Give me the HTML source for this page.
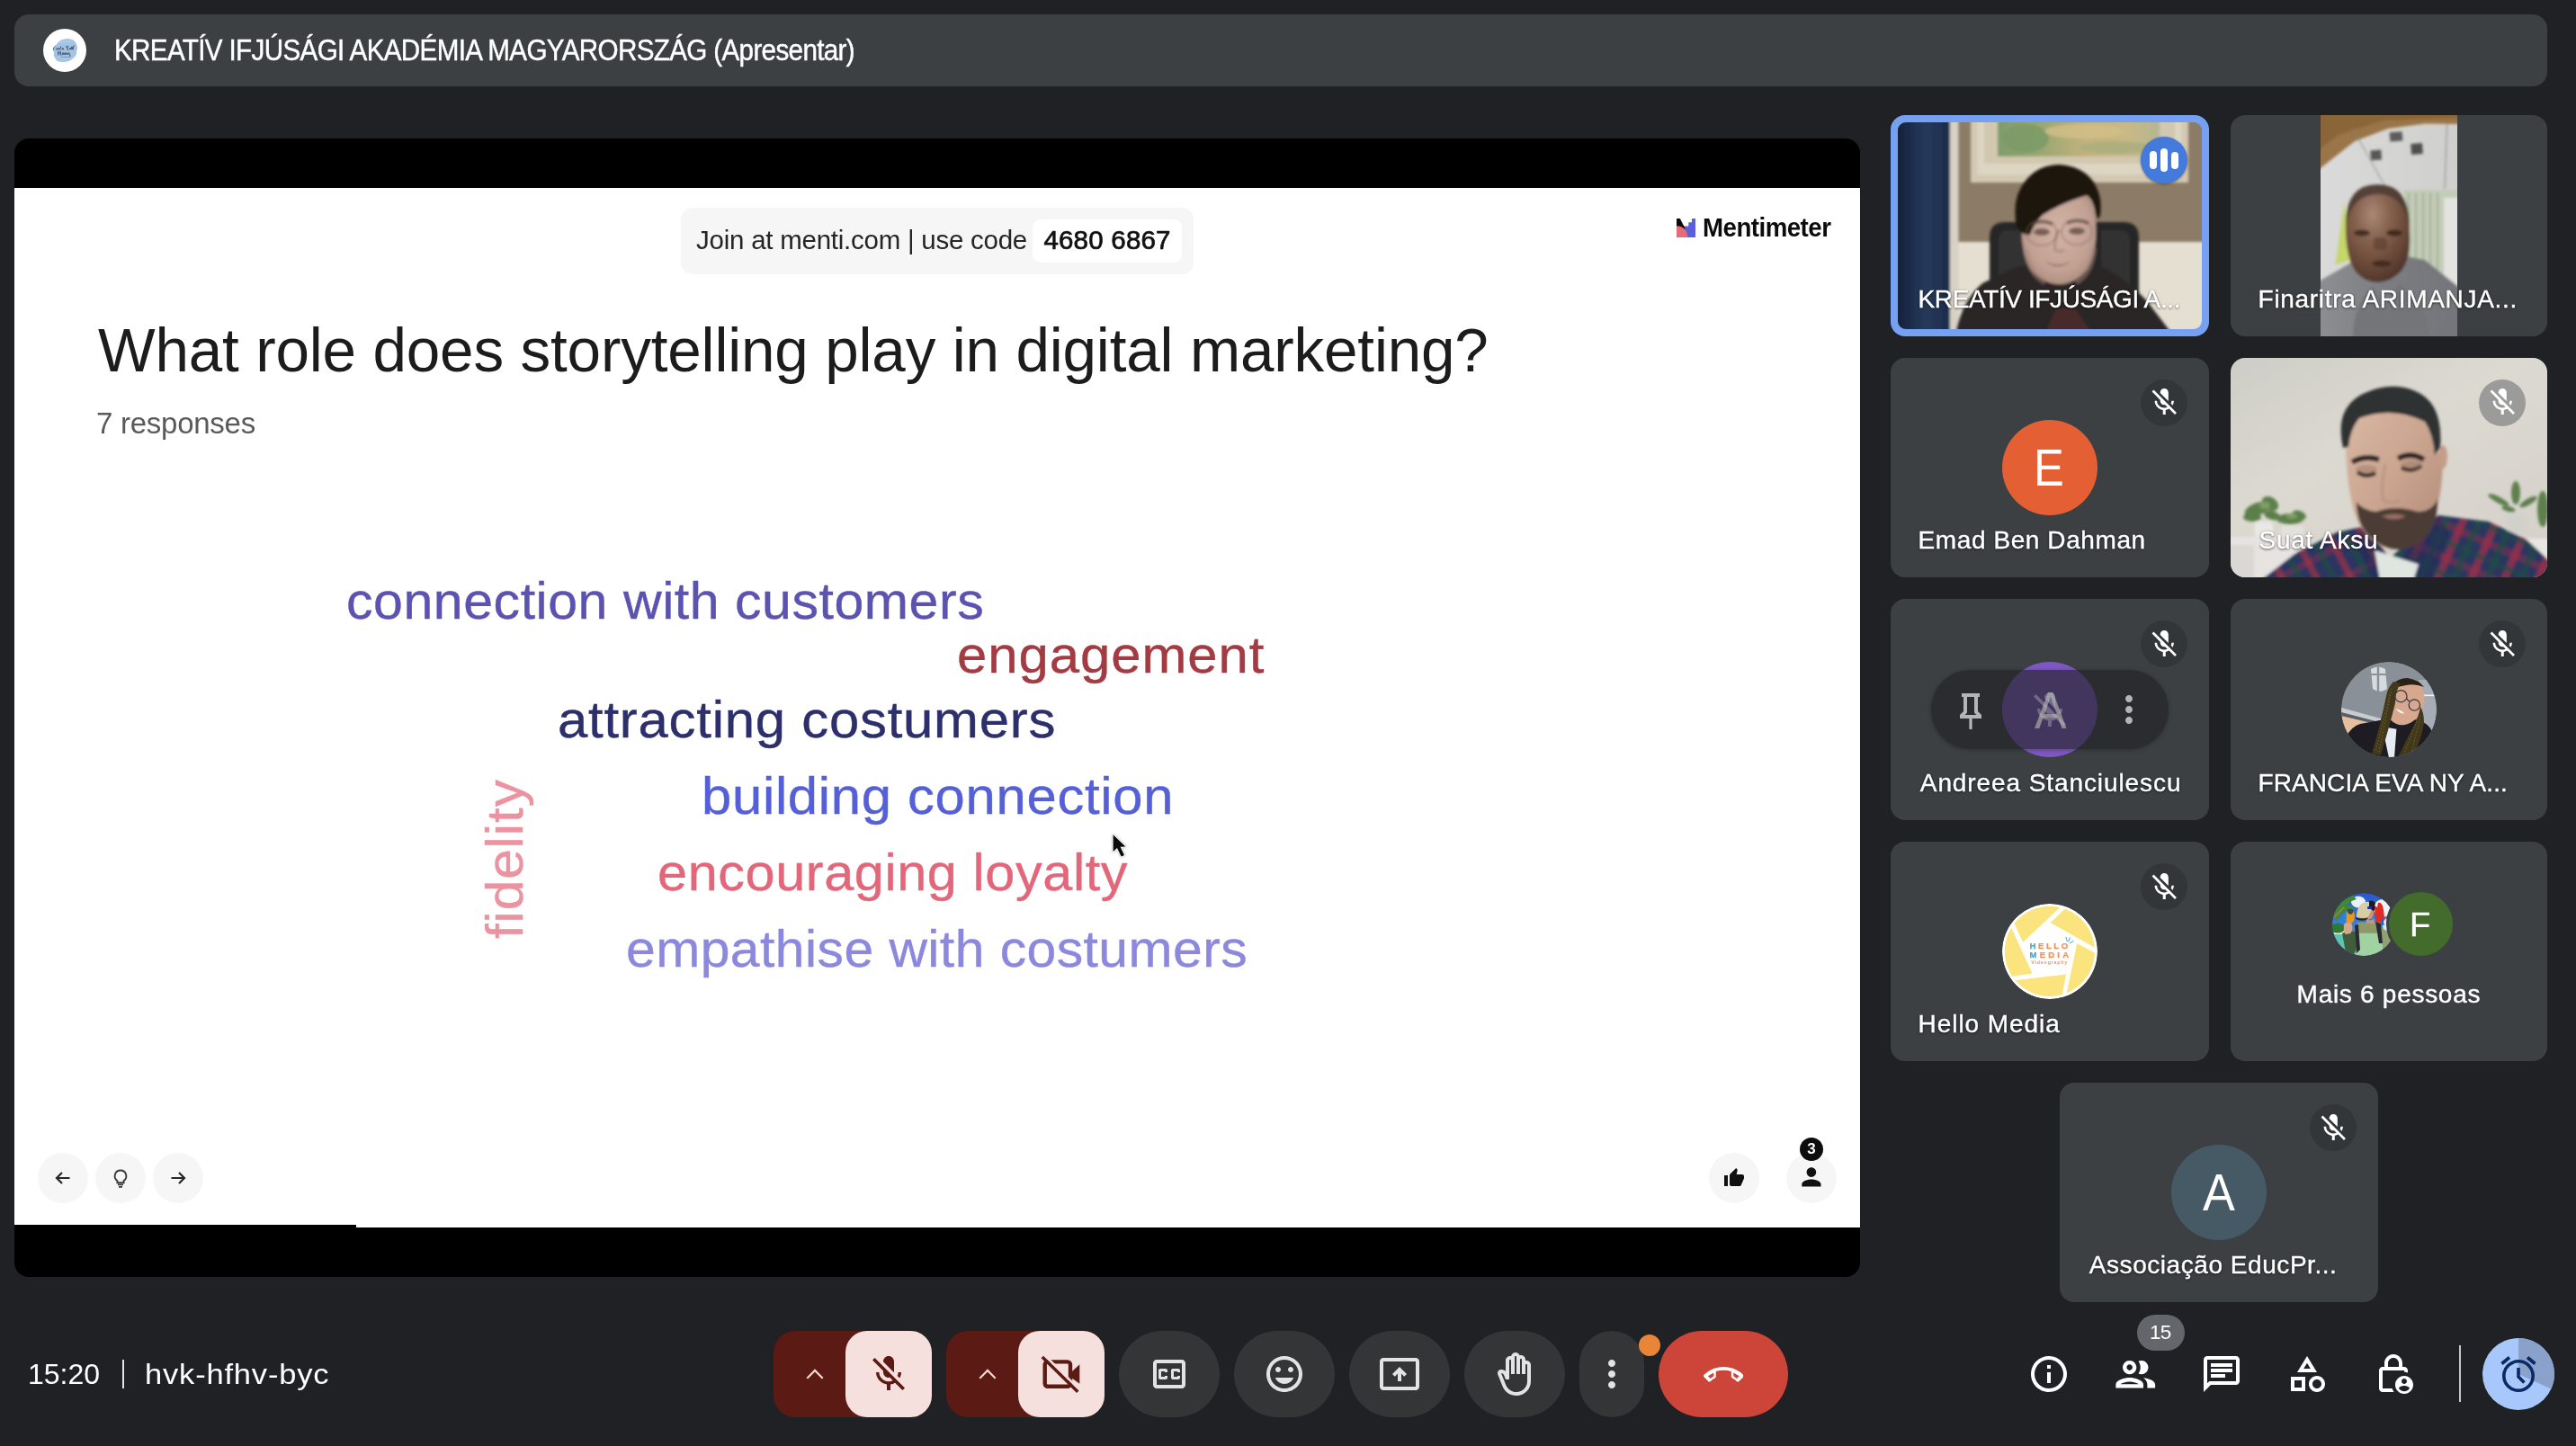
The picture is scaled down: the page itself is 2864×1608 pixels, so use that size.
<!DOCTYPE html>
<html lang="pt"><head><meta charset="utf-8"><title>Meet</title>
<style>
html,body{margin:0;padding:0}
body{width:2864px;height:1608px;background:#202124;position:relative;overflow:hidden;font-family:"Liberation Sans",sans-serif}
.abs{position:absolute}
.t{position:absolute;white-space:pre;line-height:1;transform-origin:0 0}
.tile{position:absolute;background:#3c4043;border-radius:16px;overflow:hidden}
.nm{text-shadow:0 1px 3px rgba(0,0,0,.65),0 0 2px rgba(0,0,0,.4)}
.mute{position:absolute;width:52px;height:52px;border-radius:50%;background:rgba(32,33,36,.32)}
.av{position:absolute;width:106px;height:106px;border-radius:50%;overflow:hidden}
.cb{position:absolute;top:1480px;height:96px;border-radius:48px;background:#333537}
.nav{position:absolute;width:56px;height:56px;border-radius:50%;background:#f6f6f6}
</style></head><body><div class="abs" style="left:0;top:0;width:2864px;height:1608px;will-change:transform">

<div class="abs" style="left:16px;top:16px;width:2816px;height:80px;border-radius:16px;background:#3c4043"></div>
<div class="abs" style="left:48px;top:32px;width:48px;height:48px"><svg class="abs" style="left:0;top:0" width="48" height="48" viewBox="0 0 48 48">
<defs><filter id="bt"><feGaussianBlur stdDeviation=".5"/></filter></defs>
<circle cx="24" cy="24" r="24" fill="#fff"/>
<g filter="url(#bt)"><path d="M12 27q-2-6 3-10q4-6 12-6q8 0 10 6q2 4 0 8q1 4-3 7q-4 5-12 5q-8 0-9-5q-2-2-1-5z" fill="#a3c4e6"/>
<path d="M16 16q8-5 18-1q-8-1-18 1zM14 30q8 6 20 2q-10 2-20-2z" fill="#b9d3ee" opacity=".8"/></g>
<g stroke="#2b2f3a" stroke-width=".8" fill="none" opacity=".9" stroke-linecap="round"><path d="M13 19.500q-2 1-1.500 4M14.500 23.300l1-2 1 2 1.200-2 .8 2 1.200-3.500M21 23.200l.8-2.200.8 2.200"/><path d="M25.500 19l1 2.500 1.500-2.500M27 21.500v2.200M29 23.200l1-2 1 2 1-3.500 1 3.500 1.200-4.500"/><path d="M16.800 25v4.200M16.800 27h2.500M19.300 25v4.200M21 29l1-2.500 1 2.500 1.200-2.500 1 2.500 1.200-2.500 1 2.500 1.200-2.500 1.200 2.500v2"/><path d="M19.500 31.500h9" stroke-width=".5" opacity=".7"/></g>
</svg></div>
<div class="t" style="left:126.6px;top:39.0px;font-size:33px;color:#fff;letter-spacing:-0.724px;transform:scaleX(0.8973);-webkit-text-stroke:.45px #fff;">KREATÍV IFJÚSÁGI AKADÉMIA MAGYARORSZÁG (Apresentar)</div>
<div class="abs" style="left:16px;top:154px;width:2052px;height:1266px;border-radius:16px;background:#000;overflow:hidden">
<div class="abs" style="left:0;top:54.500px;width:2052px;height:1156.700px;background:#fff"></div>
<div class="abs" style="left:0;top:1208px;width:380px;height:4px;background:#000"></div>
</div>
<div class="abs" style="left:757px;top:231px;width:570px;height:74px;border-radius:13px;background:#f6f6f6"></div>
<div class="abs" style="left:1148px;top:244px;width:166px;height:47.500px;border-radius:9px;background:#fff"></div>
<div class="t" style="left:774.1px;top:252.2px;font-size:29.5px;color:#252525;letter-spacing:-0.253px;">Join at menti.com | use code</div>
<div class="t" style="left:1160.4px;top:252.2px;font-size:29.5px;color:#111;letter-spacing:0.210px;-webkit-text-stroke:.7px #111;">4680 6867</div>
<svg class="abs" style="left:1864px;top:242.500px" width="21" height="21" viewBox="0 0 21 21"><rect x="0" y="0" width="21" height="21" fill="#fff"/>
<path d="M17 0H21V21H7V8.400H13.300V4.200H17z" fill="#5b5fd9"/><path d="M0 0H3.900L9.300 10.800V14L0 9z" fill="#0a0a0a"/><path d="M0 8.300Q11.500 8.600 12.400 21H0z" fill="#e86c78"/></svg>
<div class="t" style="left:1892.7px;top:239.3px;font-size:29px;color:#0c0c0c;font-weight:bold;letter-spacing:-0.545px;transform:scaleX(0.9540);">Mentimeter</div>
<div class="t" style="left:109.0px;top:355.2px;font-size:68px;color:#1c1c1c;letter-spacing:-0.173px;transform:scaleX(0.9913);">What role does storytelling play in digital marketing?</div>
<div class="t" style="left:106.9px;top:453.6px;font-size:33.5px;color:#5a5a5a;letter-spacing:-0.270px;transform:scaleX(0.9852);">7 responses</div>
<div class="t" style="left:384.8px;top:640.3px;font-size:57.5px;color:#5c53b0;letter-spacing:0.504px;transform:scaleX(1.0277);-webkit-text-stroke:.4px #5c53b0;">connection with customers</div>
<div class="t" style="left:1064.1px;top:700.0px;font-size:57.5px;color:#a33b42;letter-spacing:0.925px;transform:scaleX(1.0410);-webkit-text-stroke:.4px #a33b42;">engagement</div>
<div class="t" style="left:619.6px;top:772.3px;font-size:57.5px;color:#2c2f6b;letter-spacing:0.718px;transform:scaleX(1.0415);-webkit-text-stroke:.4px #2c2f6b;">attracting costumers</div>
<div class="t" style="left:779.5px;top:857.3px;font-size:57.5px;color:#5560d6;letter-spacing:0.681px;transform:scaleX(1.0395);-webkit-text-stroke:.4px #5560d6;">building connection</div>
<div class="t" style="left:730.6px;top:942.3px;font-size:57.5px;color:#e2677a;letter-spacing:0.580px;transform:scaleX(1.0328);-webkit-text-stroke:.4px #e2677a;">encouraging loyalty</div>
<div class="t" style="left:696.3px;top:1027.0px;font-size:57.5px;color:#8b88de;letter-spacing:0.440px;transform:scaleX(1.0235);-webkit-text-stroke:.4px #8b88de;">empathise with costumers</div>
<div class="t" style="left:582px;top:1043.9px;font-size:57.5px;color:#eb93a0;-webkit-text-stroke:.4px #eb93a0;letter-spacing:0.753px;transform-origin:0 0;transform:rotate(-90deg) scaleX(1.0512) translateY(-48.7px)">fidelity</div>
<svg class="abs" style="left:1230px;top:922px" width="30" height="38" viewBox="0 0 30 38"><path d="M7.600 6.300V25l4.400-4 4.600 9.400 3.400-1.400-4.400-9.200 5.900-.3z" fill="#0a0a0a" stroke="#fff" stroke-width="1.800" stroke-linejoin="round" paint-order="stroke" style="filter:drop-shadow(0 .5px 1px rgba(0,0,0,.35))"/></svg>
<div class="nav" style="left:41.7px;top:1281.500px"></div>
<div class="nav" style="left:105.7px;top:1281.500px"></div>
<div class="nav" style="left:170.2px;top:1281.500px"></div>
<svg class="abs" style="left:57.700px;top:1297.500px" width="24" height="24" viewBox="0 0 24 24"><path d="M19.500 12H5.500M11 6l-6 6 6 6" fill="none" stroke="#262626" stroke-width="2.200"/></svg>
<svg class="abs" style="left:186.200px;top:1297.500px" width="24" height="24" viewBox="0 0 24 24"><path d="M4.500 12h14M13 6l6 6-6 6" fill="none" stroke="#262626" stroke-width="2.200"/></svg>
<svg class="abs" style="left:121.700px;top:1297.500px" width="24" height="24" viewBox="0 0 24 24"><path d="M12 3.500a6.300 6.300 0 0 0-3.600 11.500v2.200h7.200V15A6.300 6.300 0 0 0 12 3.500z" fill="none" stroke="#3a3a3a" stroke-width="1.900"/><path d="M9 19.400h6M10 21.800h4" stroke="#3a3a3a" stroke-width="1.700"/></svg>
<div class="nav" style="left:1900.400px;top:1281.500px"></div>
<div class="nav" style="left:1985.800px;top:1281.500px"></div>
<svg class="abs" style="left:1916.3px;top:1297.9px" width="24" height="24" viewBox="0 0 24 24"><path fill="#111" d="M1 21h4V9H1v12zm22-11c0-1.100-.9-2-2-2h-6.310l.95-4.570.03-.32c0-.41-.17-.79-.44-1.060L14.170 1 7.590 7.590C7.220 7.950 7 8.450 7 9v10c0 1.100.9 2 2 2h9c.83 0 1.540-.5 1.840-1.220l3.020-7.050c.09-.23.140-.47.140-.730v-2z"/></svg>
<svg class="abs" style="left:1998.0px;top:1293.4px" width="31.8" height="31.8" viewBox="0 0 24 24"><path fill="#111" d="M12 12c2.210 0 4-1.790 4-4s-1.790-4-4-4-4 1.790-4 4 1.790 4 4 4zm0 2c-2.670 0-8 1.340-8 4v2h16v-2c0-2.660-5.330-4-8-4z"/></svg>
<div class="abs" style="left:2001px;top:1264.500px;width:26px;height:26px;border-radius:50%;background:#0d0d0d"></div>
<div class="t" style="left:2009.2px;top:1268.8px;font-size:17px;color:#fff;font-weight:bold;">3</div>
<div class="tile" style="left:2102px;top:128px;width:354px;height:246px;background:#76a1f2">
<div class="abs" style="left:8px;top:8px;width:338px;height:230px;border-radius:9px;overflow:hidden"><div class="abs" style="left:-8px;top:-8px;width:354px;height:246px"><svg class="abs" style="left:0;top:0" width="354" height="246" viewBox="0 0 354 246">
<defs><filter id="b1" x="-10%" y="-10%" width="120%" height="120%"><feGaussianBlur stdDeviation="1.5"/></filter>
<filter id="b1b" x="-20%" y="-20%" width="140%" height="140%"><feGaussianBlur stdDeviation="4"/></filter>
<linearGradient id="pg1" x1="0" y1="0" x2="1" y2="0"><stop offset="0" stop-color="#7f9c6c"/><stop offset=".3" stop-color="#9fa873"/><stop offset=".55" stop-color="#c4b27c"/><stop offset=".8" stop-color="#c9b986"/><stop offset="1" stop-color="#b4b592"/></linearGradient>
<linearGradient id="cur1" x1="0" y1="0" x2="1" y2="0"><stop offset="0" stop-color="#0e172c"/><stop offset=".25" stop-color="#1a2947"/><stop offset=".6" stop-color="#27395b"/><stop offset="1" stop-color="#1b2a4a"/></linearGradient>
<radialGradient id="sk1" cx=".5" cy=".45" r=".6"><stop offset="0" stop-color="#d2b3a5"/><stop offset=".7" stop-color="#c2a193"/><stop offset="1" stop-color="#a98a7e"/></radialGradient>
</defs>
<rect width="354" height="246" fill="#8c7b66"/>
<g filter="url(#b1)">
<rect x="70" y="141" width="290" height="110" fill="#e5dfd1"/>
<rect x="0" y="0" width="67" height="246" fill="url(#cur1)"/>
<rect x="66" y="0" width="9.500" height="246" fill="#d8d1c5"/>
<rect x="89" y="-4" width="242" height="79" fill="#d3c9b3"/>
<rect x="97" y="-4" width="226" height="70" fill="#ded6c4"/>
<rect x="104" y="-4" width="212" height="58" fill="#d2c8b0"/>
<rect x="119" y="-4" width="180" height="50" fill="url(#pg1)"/>
<ellipse cx="150" cy="26" rx="26" ry="16" fill="#7b9a66" opacity=".85"/>
<ellipse cx="215" cy="18" rx="44" ry="8" fill="#d2bf88" opacity=".8"/>
<ellipse cx="250" cy="36" rx="40" ry="7" fill="#a8ad7e" opacity=".8"/>
</g>
<g filter="url(#b1)">
<path d="M110 246V136q0-17 17-17h132q17 0 17 17v110z" fill="#272727"/>
<path d="M120 200V140q0-12 12-12h20v72zM266 200V140q0-12-12-12h-20v72z" fill="#313131"/>
<path d="M72 246q6-38 30-59l34-17 30-6h40l20-1 29 17q22 16 34 32l26 34z" fill="#2b2827"/>
<path d="M158 170q28 36 62 0l-6-34h-50z" fill="#bb9a8c"/>
<path d="M146 120q0-40 42-40q40 0 40 40q2 34-10 52q-14 16-30 16q-18 0-32-16q-12-20-10-52z" fill="url(#sk1)"/>
<path d="M140 124q-6-32 10-51q14-18 38-18q26 2 38 20q10 16 7 36q-3 8-5 0q-1-16-9-22q-28 8-50 22q-10 10-14 22q-8 2-15-9z" fill="#1b1311"/>
<path d="M172 163q14 7 28 0q-14 10-28 0z" fill="#8a5850"/>
<ellipse cx="168" cy="130" rx="9" ry="4" fill="#5e4640" opacity=".75"/><ellipse cx="207" cy="129" rx="9" ry="4" fill="#5e4640" opacity=".75"/>
<path d="M156 121q12-5 24 0M196 120q12-5 24 0" stroke="#3a2a26" stroke-width="3" fill="none" opacity=".7"/>
<path d="M186 128q-5 18-3 22q5 3 10 0" stroke="#a98679" stroke-width="3" fill="none" opacity=".8"/>
<path d="M150 150q4 26 22 36M226 148q-2 26-20 38" stroke="#a38478" stroke-width="6" fill="none" opacity=".5"/>
<path d="M170 246l14-30 20-2 22 32z" fill="#4a2a2c"/>
</g>
<g fill="none" stroke="#85695f" stroke-width="1.600" opacity=".55" filter="url(#b1)"><ellipse cx="168" cy="131" rx="17" ry="14"/><ellipse cx="207" cy="130" rx="17" ry="14"/><path d="M185 129h5"/></g>
</svg></div></div>
</div>
<div class="abs" style="left:2380px;top:152px;width:52px;height:52px;border-radius:50%;background:#437adc;box-shadow:0 1px 3px rgba(0,0,0,.4)"></div>
<div class="abs" style="left:2390px;top:167.900px;width:8.200px;height:20.200px;border-radius:4px;background:#fff"></div>
<div class="abs" style="left:2402px;top:164.800px;width:8.200px;height:26.200px;border-radius:4px;background:#fff"></div>
<div class="abs" style="left:2414px;top:169.100px;width:8.200px;height:18.700px;border-radius:4px;background:#fff"></div>
<div class="t nm" style="left:2132.6px;top:319.3px;font-size:28px;color:#fff;letter-spacing:-0.396px;-webkit-text-stroke:.4px #fff;">KREATÍV IFJÚSÁGI A...</div>
<div class="tile" style="left:2480px;top:128px;width:352px;height:246px"><svg class="abs" style="left:100px;top:0" width="152" height="246" viewBox="0 0 152 246">
<defs><filter id="b2" x="-10%" y="-10%" width="120%" height="120%"><feGaussianBlur stdDeviation="1.700"/></filter>
<radialGradient id="sk2" cx=".42" cy=".3" r=".75"><stop offset="0" stop-color="#a98876"/><stop offset=".35" stop-color="#86634f"/><stop offset=".75" stop-color="#654535"/><stop offset="1" stop-color="#4a3228"/></radialGradient>
<linearGradient id="w2" x1="0" y1="0" x2="1" y2="0"><stop offset="0" stop-color="#dadada"/><stop offset="1" stop-color="#cfcfcd"/></linearGradient>
<linearGradient id="sw2" x1="0" y1="0" x2="1" y2="0"><stop offset="0" stop-color="#8e8f93"/><stop offset=".5" stop-color="#7b7c80"/><stop offset="1" stop-color="#74757a"/></linearGradient></defs>
<rect width="152" height="246" fill="url(#w2)"/>
<g filter="url(#b2)">
<path d="M-4 -4H156V10L116 9.400 75 15 38 29-4 62z" fill="#9a7546"/>
<path d="M-4 -4H156V3L70 6 20 22-4 40z" fill="#8a6539"/>
<rect x="77" y="18.700" width="14" height="10.300" fill="#5c5c5c" transform="rotate(-4 84 24)"/>
<rect x="100.600" y="31.500" width="12.800" height="12" fill="#505050" transform="rotate(-4 107 37)"/>
<rect x="55.600" y="39" width="12" height="11" fill="#565656" transform="rotate(-4 61 44)"/>
<path d="M36 15L72 80" stroke="#858a84" stroke-width="1"/><path d="M140.600 10L138 82" stroke="#858a84" stroke-width="1"/>
<rect x="92" y="83" width="64" height="110" fill="#c4ccb7"/>
<g stroke="#a3b198" stroke-width="2.200"><path d="M98 86v104M106 86v104M114 86v104M122 86v104M130 86v104"/></g>
<rect x="137" y="92" width="19" height="100" fill="#e3e4df"/>
<path d="M26.700 95L16.500 166.600 36 160 29 119z" fill="#c5d66a"/>
<path d="M-4 250V186l40-23 24-6h36l20 4 40 32v60z" fill="url(#sw2)"/>
<path d="M40 168q24 30 54 -4l-4-24H44z" fill="#5c3f31"/>
<path d="M28 130q-2-52 36-52q36 0 35 52q2 30-10 44q-12 12-26 12q-14 0-24-12q-10-14-11-44z" fill="url(#sk2)"/>
<path d="M28 122q0-46 36-45q34 0 35 45q-8-34-35-34q-28 0-36 34z" fill="#4a3a33" opacity=".8"/>
<ellipse cx="46" cy="131" rx="9" ry="3.500" fill="#2c1c16" opacity=".75"/><ellipse cx="82" cy="131" rx="9" ry="3.500" fill="#2c1c16" opacity=".75"/>
<path d="M60 136q-4 12 2 14h10q4-4 0-14z" fill="#5a3d30" opacity=".6"/>
<ellipse cx="68" cy="165" rx="11" ry="3.500" fill="#3a221b" opacity=".75"/>
<path d="M36 250q0-40 22-60l12 22 18-24q28 14 34 62z" fill="#737479"/>
</g></svg></div>
<div class="t nm" style="left:2510.6px;top:319.3px;font-size:28px;color:#fff;letter-spacing:0.691px;-webkit-text-stroke:.4px #fff;">Finaritra ARIMANJA...</div>
<div class="tile" style="left:2102px;top:398px;width:354px;height:244px"></div>
<div class="av" style="left:2226px;top:467px;background:#e46034"></div>
<div class="t" style="left:2260.9px;top:492.1px;font-size:57.5px;color:#fff;transform:scaleX(0.8807);">E</div>
<div class="mute" style="left:2380px;top:422px"></div><svg class="abs" style="left:2387.8px;top:429.4px" width="36.5" height="36.5" viewBox="0 0 24 24"><path fill="#fff" d="M19 11h-1.7c0 .74-.16 1.43-.43 2.05l1.23 1.23c.56-.98.9-2.09.9-3.28zm-4.02.17c0-.06.02-.11.02-.17V5c0-1.66-1.34-3-3-3S9 3.34 9 5v.18l5.98 5.99zM4.27 3L3 4.27l6.01 6.01V11c0 1.66 1.33 3 2.99 3 .22 0 .44-.03.65-.08l1.66 1.66c-.71.33-1.5.52-2.31.52-2.76 0-5.3-2.1-5.3-5.1H5c0 3.41 2.72 6.23 6 6.72V21h2v-3.28c.91-.13 1.77-.45 2.54-.9L19.73 21 21 19.73 4.27 3z"/></svg>
<div class="t nm" style="left:2132.6px;top:587.3px;font-size:28px;color:#fff;letter-spacing:0.583px;-webkit-text-stroke:.4px #fff;">Emad Ben Dahman</div>
<div class="tile" style="left:2480px;top:398px;width:352px;height:244px"><svg class="abs" style="left:0;top:0" width="352" height="244" viewBox="0 0 352 244">
<defs><filter id="b4" x="-10%" y="-10%" width="120%" height="120%"><feGaussianBlur stdDeviation="1.4"/></filter>
<filter id="b4b" x="-20%" y="-20%" width="140%" height="140%"><feGaussianBlur stdDeviation="3.500"/></filter>
<linearGradient id="bg4" x1="0" y1="0" x2=".8" y2="1"><stop offset="0" stop-color="#cdcdc7"/><stop offset=".45" stop-color="#dcd9d1"/><stop offset="1" stop-color="#d6d2cb"/></linearGradient>
<pattern id="pl4" width="34" height="34" patternUnits="userSpaceOnUse" patternTransform="rotate(24)"><rect width="34" height="34" fill="#2a3461"/><rect x="0" y="0" width="8" height="34" fill="#b52e41" opacity=".62"/><rect x="0" y="0" width="34" height="8" fill="#b52e41" opacity=".38"/><rect x="17" y="0" width="7" height="34" fill="#1f4d44" opacity=".7"/><rect x="0" y="18" width="34" height="6" fill="#1f4d44" opacity=".6"/></pattern>
<pattern id="pl4b" width="34" height="34" patternUnits="userSpaceOnUse" patternTransform="rotate(-28)"><rect width="34" height="34" fill="#2a3461"/><rect x="0" y="0" width="7" height="34" fill="#b52e41" opacity=".6"/><rect x="0" y="0" width="34" height="7" fill="#b52e41" opacity=".35"/><rect x="17" y="0" width="7" height="34" fill="#1f4d44" opacity=".7"/></pattern>
<linearGradient id="sk4" x1="0" y1="0" x2="1" y2="1"><stop offset="0" stop-color="#d8b8a5"/><stop offset=".5" stop-color="#caa48f"/><stop offset="1" stop-color="#b08a76"/></linearGradient>
</defs>
<rect width="352" height="244" fill="url(#bg4)"/>
<g filter="url(#b4)">
<path d="M-4 199H73V250H-4z" fill="#e6e3e0"/><path d="M-4 208H26V250H-4z" fill="#dad7d4"/><rect x="320" y="201" width="36" height="48" fill="#e8e6e3"/>
<rect x="27" y="182" width="20" height="18" rx="4" fill="#e9e8e4"/><rect x="56" y="187" width="25" height="13" rx="4" fill="#e2e1dc"/>
<g fill="#5c7f4a"><ellipse cx="30" cy="168" rx="15" ry="7" transform="rotate(-20 30 168)"/><ellipse cx="44" cy="162" rx="10" ry="7" transform="rotate(35 44 162)"/><ellipse cx="24" cy="177" rx="10" ry="5"/><ellipse cx="46" cy="175" rx="9" ry="5" transform="rotate(15 46 175)"/><ellipse cx="66" cy="179" rx="15" ry="6"/><ellipse cx="76" cy="175" rx="8" ry="5" transform="rotate(20 76 175)"/></g>
<g fill="#86a86e" opacity=".8"><ellipse cx="38" cy="164" rx="6" ry="4"/><ellipse cx="68" cy="176" rx="6" ry="3"/></g>
<rect x="307" y="172" width="22" height="25" rx="9" fill="#d2d0cb"/>
<g fill="#5f7f4e"><ellipse cx="317" cy="150" rx="5" ry="13"/><ellipse cx="298" cy="158" rx="13" ry="3.500" transform="rotate(28 298 158)"/><ellipse cx="331" cy="160" rx="11" ry="3.500" transform="rotate(-30 331 160)"/><ellipse cx="347" cy="168" rx="6" ry="20"/><ellipse cx="309" cy="168" rx="8" ry="3" transform="rotate(15 309 168)"/></g>
<path d="M30 250L71 218l47-24 32-7 30 40v30z" fill="url(#pl4b)"/><path d="M180 250v-30l51-45 56 7 42 20 30 28v20z" fill="url(#pl4)"/>
<path d="M148 187l36 44-8 19h-20l-16-50zM231 175l-40 46 8 29h22l22-54z" fill="#242c55" opacity=".55"/>
<path d="M160 214l49 15.500-6.500 20h-36z" fill="#dfe5df"/>
<path d="M146 170q40 56 82 0v-40h-82z" fill="#b28d79"/>
<path d="M128 100q-2-44 50-46q52-2 50 50l8 6q0 40-10 68q-20 34-42 35q-26-1-42-30q-12-26-14-83z" fill="url(#sk4)"/>
<ellipse cx="236" cy="110" rx="5" ry="13" fill="#c49d89"/>
<path d="M140 160q0 24 14 38q16 15 32 15q20 0 36-20q8-12 8-36q-6 14-22 14q-26-8-46 0q-16-2-22-11z" fill="#4c3d36"/>
<path d="M168 176q14-5 27 0q-13 7-27 0z" fill="#9a6c60"/>
<path d="M125 100q-10-44 22-60q30-14 56-4q34 12 30 64l-6 8q-2-24-11-37q-36-18-73-4q-10 12-12 32z" fill="#2f3130"/>
<path d="M135 116q14-8 30-3" stroke="#2e2421" stroke-width="6" fill="none"/><path d="M186 112q14-8 29 1" stroke="#2e2421" stroke-width="6" fill="none"/>
<path d="M141 127q10 7 20 1" stroke="#2e2421" stroke-width="4.500" fill="none"/><path d="M190 122q11 6 22-2" stroke="#2e2421" stroke-width="4.500" fill="none"/><ellipse cx="151" cy="124" rx="12" ry="5" fill="#9a7868" opacity=".5"/><ellipse cx="201" cy="119" rx="12" ry="5" fill="#9a7868" opacity=".5"/>
<path d="M172 118q-6 30-2 40q8 6 18 0" stroke="#b58f7c" stroke-width="3" fill="none" opacity=".7"/>
</g></svg></div>
<div class="mute" style="left:2756px;top:422px;background:rgba(150,150,150,.92)"></div><svg class="abs" style="left:2763.8px;top:429.4px" width="36.5" height="36.5" viewBox="0 0 24 24"><path fill="#fff" d="M19 11h-1.7c0 .74-.16 1.43-.43 2.05l1.23 1.23c.56-.98.9-2.09.9-3.28zm-4.02.17c0-.06.02-.11.02-.17V5c0-1.66-1.34-3-3-3S9 3.34 9 5v.18l5.98 5.99zM4.27 3L3 4.27l6.01 6.01V11c0 1.66 1.33 3 2.99 3 .22 0 .44-.03.65-.08l1.66 1.66c-.71.33-1.5.52-2.31.52-2.76 0-5.3-2.1-5.3-5.1H5c0 3.41 2.72 6.23 6 6.72V21h2v-3.28c.91-.13 1.77-.45 2.54-.9L19.73 21 21 19.73 4.27 3z"/></svg>
<div class="t nm" style="left:2511.5px;top:587.3px;font-size:28px;color:#fff;letter-spacing:0.735px;-webkit-text-stroke:.4px #fff;">Suat Aksu</div>
<div class="tile" style="left:2102px;top:666px;width:354px;height:246px"></div>
<div class="av" style="left:2226px;top:736px;background:#7e57c2"></div>
<div class="abs" style="left:2147px;top:745px;width:264px;height:88px;border-radius:44px;background:rgba(32,33,36,.63);box-shadow:0 1px 5px rgba(0,0,0,.28)"></div>
<svg class="abs" style="left:2166.8px;top:766.5px" width="48" height="48" viewBox="0 0 24 24"><path fill="#b4b5b7" d="M16 12V4h1V2H7v2h1v8l-2 2v2h5.2v6h1.6v-6H18v-2l-2-2zm-7.2 2l1.2-1.2V4h4v8.800l1.200 1.200H8.800z"/></svg>
<div class="t" style="left:2261.5px;top:761.5px;font-size:57.5px;color:rgba(150,150,150,.85);transform:scaleX(0.9284);">A</div>
<svg class="abs" style="left:2255.0px;top:765.8px" width="48" height="48" viewBox="0 0 24 24"><path fill="rgba(195,192,210,.38)" d="M19 11h-1.7c0 .74-.16 1.43-.43 2.05l1.23 1.23c.56-.98.9-2.09.9-3.28zm-4.02.17c0-.06.02-.11.02-.17V5c0-1.66-1.34-3-3-3S9 3.34 9 5v.18l5.98 5.99zM4.27 3L3 4.27l6.01 6.01V11c0 1.66 1.33 3 2.99 3 .22 0 .44-.03.65-.08l1.66 1.66c-.71.33-1.5.52-2.31.52-2.76 0-5.3-2.1-5.3-5.1H5c0 3.41 2.72 6.23 6 6.72V21h2v-3.28c.91-.13 1.77-.45 2.54-.9L19.73 21 21 19.73 4.27 3z"/></svg>
<svg class="abs" style="left:2342.7px;top:765.0px" width="48" height="48" viewBox="0 0 24 24"><path fill="#b4b5b7" d="M12 8c1.1 0 2-.9 2-2s-.9-2-2-2-2 .9-2 2 .9 2 2 2zm0 2c-1.1 0-2 .9-2 2s.9 2 2 2 2-.9 2-2-.9-2-2-2zm0 6c-1.1 0-2 .9-2 2s.9 2 2 2 2-.9 2-2-.9-2-2-2z"/></svg>
<div class="mute" style="left:2380px;top:690px"></div><svg class="abs" style="left:2387.8px;top:697.5px" width="36.5" height="36.5" viewBox="0 0 24 24"><path fill="#fff" d="M19 11h-1.7c0 .74-.16 1.43-.43 2.05l1.23 1.23c.56-.98.9-2.09.9-3.28zm-4.02.17c0-.06.02-.11.02-.17V5c0-1.66-1.34-3-3-3S9 3.34 9 5v.18l5.98 5.99zM4.27 3L3 4.27l6.01 6.01V11c0 1.66 1.33 3 2.99 3 .22 0 .44-.03.65-.08l1.66 1.66c-.71.33-1.5.52-2.31.52-2.76 0-5.3-2.1-5.3-5.1H5c0 3.41 2.72 6.23 6 6.72V21h2v-3.28c.91-.13 1.77-.45 2.54-.9L19.73 21 21 19.73 4.27 3z"/></svg>
<div class="t nm" style="left:2134.8px;top:857.3px;font-size:28px;color:#fff;letter-spacing:0.909px;-webkit-text-stroke:.4px #fff;">Andreea Stanciulescu</div>
<div class="tile" style="left:2480px;top:666px;width:352px;height:246px"></div>
<div class="av" style="left:2603px;top:736px"><svg class="abs" style="left:0;top:0" width="106" height="106" viewBox="0 0 106 106">
<defs><clipPath id="cf"><circle cx="53" cy="53" r="53"/></clipPath><filter id="bf"><feGaussianBlur stdDeviation=".7"/></filter></defs>
<g clip-path="url(#cf)"><rect width="106" height="106" fill="#8a9098"/>
<g filter="url(#bf)">
<rect x="86" y="20" width="22" height="60" fill="#a7adb6"/>
<path d="M33 8q8-5 16 0l2 22q-8 6-16 0z" fill="#dfe3e6" opacity=".9"/><path d="M41 4v30" stroke="#8a9098" stroke-width="2.500"/><path d="M32 14h20" stroke="#8a9098" stroke-width="2"/>
<path d="M0 51l44 12v5L0 57z" fill="#c8ccd0"/><path d="M0 56l44 11.500v4L0 61z" fill="#595e66"/>
<path d="M0 60l42 10-24 2-12 12-8-4z" fill="#e5bf9f"/>
<path d="M91 36.500h14v1.600H91z" fill="#f1f3f5"/>
<path d="M5 84q6-12 16-15l22-4 30-2 14 2q10 4 14 12l4 34H5z" fill="#1e1a20"/>
<path d="M45.600 72l15.800 2.700-2.400 32h-6z" fill="#e7ecf2"/>
<ellipse cx="71" cy="45" rx="20.500" ry="26" fill="#d8a88e" transform="rotate(22 71 45)"/>
<path d="M54 30q6-12 20-12q12 2 18 10q-10-4-20-2q-10 2-18 4z" fill="#2b2114"/>
<path d="M58 22q-6 6-8 16q-6 30-16 64l10 2q10-34 16-58q0-14 6-22z" fill="#43381e"/>
<path d="M88 50q-2 12-8 22q-8 16-16 32h16q10-20 12-36q0-12-4-18z" fill="#43381e"/>
<path d="M60.500 52q4 5.500 9.500 5.500q-1.500-3-9.500-5.500z" fill="#fff"/>
</g>
<g fill="none" stroke="#3a3a46" stroke-width="1.300"><circle cx="66.400" cy="38.200" r="6.600"/><circle cx="81.300" cy="48" r="6.200"/><path d="M72.600 41l3 3"/></g>
<g stroke="#a08a3c" stroke-width=".8" opacity=".7" stroke-dasharray="1.500 2"><path d="M54 36L38 100M56 30L42 100M84 66L70 102M88 60L78 102"/></g>
</g></svg></div>
<div class="mute" style="left:2756px;top:690px"></div><svg class="abs" style="left:2763.8px;top:697.5px" width="36.5" height="36.5" viewBox="0 0 24 24"><path fill="#fff" d="M19 11h-1.7c0 .74-.16 1.43-.43 2.05l1.23 1.23c.56-.98.9-2.09.9-3.28zm-4.02.17c0-.06.02-.11.02-.17V5c0-1.66-1.34-3-3-3S9 3.34 9 5v.18l5.98 5.99zM4.27 3L3 4.27l6.01 6.01V11c0 1.66 1.33 3 2.99 3 .22 0 .44-.03.65-.08l1.66 1.66c-.71.33-1.5.52-2.31.52-2.76 0-5.3-2.1-5.3-5.1H5c0 3.41 2.72 6.23 6 6.72V21h2v-3.28c.91-.13 1.77-.45 2.54-.9L19.73 21 21 19.73 4.27 3z"/></svg>
<div class="t nm" style="left:2510.6px;top:857.3px;font-size:28px;color:#fff;letter-spacing:0.071px;-webkit-text-stroke:.4px #fff;">FRANCIA EVA NY A...</div>
<div class="tile" style="left:2102px;top:936px;width:354px;height:244px"></div>
<div class="av" style="left:2226px;top:1005px"><svg class="abs" style="left:0;top:0" width="106" height="106" viewBox="0 0 106 106"><defs><clipPath id="ch"><circle cx="52.89" cy="52.89" r="50.1"/></clipPath></defs><circle cx="53" cy="53" r="53" fill="#fff"/><g clip-path="url(#ch)" fill="#fbe47e"><polygon points="23.1,42.7 13.9,22.7 -5.5,7.5 22.9,-32.0 69.6,-19.9 64.0,4.4"/><polygon points="53.6,20.9 69.3,6.1 77.5,-17.3 123.9,-2.4 127.1,46.1 102.4,48.4"/><polygon points="83.2,44.0 102.8,54.5 127.8,55.2 127.2,103.7 81.4,121.3 71.9,98.5"/><polygon points="71.0,78.4 67.1,100.2 74.2,123.9 27.8,139.3 -2.9,101.0 15.7,85.0"/><polygon points="33.5,77.6 13.1,80.6 -6.8,94.5 -37.1,55.4 -10.8,14.7 10.5,27.4"/></g><text x="30.6" y="49.8" font-family="Liberation Sans,sans-serif" font-weight="bold" font-size="9.6" textLength="42.5" lengthAdjust="spacing" fill="#f0925c" stroke="#f0925c" stroke-width=".25"><tspan fill="#3fa9cf" stroke="#3fa9cf">H</tspan>ELLO</text><text x="30.6" y="60.2" font-family="Liberation Sans,sans-serif" font-weight="bold" font-size="9.6" textLength="43.5" lengthAdjust="spacing" fill="#f0925c" stroke="#f0925c" stroke-width=".25"><tspan fill="#3fa9cf" stroke="#3fa9cf">M</tspan>EDIA</text><text x="32.3" y="66.8" font-family="Liberation Sans,sans-serif" font-weight="bold" font-size="5.3" textLength="40" lengthAdjust="spacing" fill="#f0925c">Videography</text><g stroke="#3fa9cf" stroke-width="1" stroke-linecap="round"><path d="M71 37.200l1.300 4.500M75.200 37.800l-1.600 4.200M79.200 41.500l-4 2.300"/></g></svg></div>
<div class="mute" style="left:2380px;top:960px"></div><svg class="abs" style="left:2387.8px;top:967.5px" width="36.5" height="36.5" viewBox="0 0 24 24"><path fill="#fff" d="M19 11h-1.7c0 .74-.16 1.43-.43 2.05l1.23 1.23c.56-.98.9-2.09.9-3.28zm-4.02.17c0-.06.02-.11.02-.17V5c0-1.66-1.34-3-3-3S9 3.34 9 5v.18l5.98 5.99zM4.27 3L3 4.27l6.01 6.01V11c0 1.66 1.33 3 2.99 3 .22 0 .44-.03.65-.08l1.66 1.66c-.71.33-1.5.52-2.31.52-2.76 0-5.3-2.1-5.3-5.1H5c0 3.41 2.72 6.23 6 6.72V21h2v-3.28c.91-.13 1.77-.45 2.54-.9L19.73 21 21 19.73 4.27 3z"/></svg>
<div class="t nm" style="left:2132.6px;top:1125.3px;font-size:28px;color:#fff;letter-spacing:0.940px;-webkit-text-stroke:.4px #fff;">Hello Media</div>
<div class="tile" style="left:2480px;top:936px;width:352px;height:244px"></div>
<div class="abs" style="left:2592.500px;top:993px;width:70px;height:70px;border-radius:50%;overflow:hidden"><svg class="abs" style="left:0;top:0" width="70" height="70" viewBox="0 0 70 70">
<defs><clipPath id="cp"><circle cx="35" cy="35" r="35"/></clipPath><filter id="bp"><feGaussianBlur stdDeviation=".6"/></filter>
<linearGradient id="skyp" x1="0" y1="0" x2="0" y2="1"><stop offset="0" stop-color="#2757cf"/><stop offset=".5" stop-color="#3a7fdc"/><stop offset="1" stop-color="#7db9e8"/></linearGradient></defs>
<g clip-path="url(#cp)"><rect width="70" height="70" fill="url(#skyp)"/>
<g filter="url(#bp)">
<ellipse cx="29" cy="10" rx="8" ry="6.500" fill="#e9f0fb"/><ellipse cx="56" cy="17" rx="10" ry="10" fill="#eef3fb"/><ellipse cx="62" cy="36" rx="6" ry="8" fill="#dbe9f7"/>
<rect x="-2" y="44" width="74" height="30" fill="#5cc4b2"/><rect x="-2" y="42" width="20" height="4" fill="#e9e4d0"/>
<ellipse cx="6" cy="39" rx="8" ry="5.500" fill="#2f7a34"/>
<path d="M1 27q4-18 22-24l4 4q-8 2-12 8q8-2 12 2q-10 0-16 6q-4 4-6 8z" fill="#3d8a30"/><path d="M1.800 27.500L13.400 15.500" stroke="#9a7a44" stroke-width="2.200"/>
<path d="M11 44.700l6-2 11 0 1 17-6 10-8-4z" fill="#3f5c3e"/>
<path d="M28 33l14-1 12 1 2 12H28z" fill="#8d9968"/>
<path d="M28 44.700h27l2 26H26z" fill="#a0d2a2"/>
<path d="M54 38l9 6 4 16-10 8z" fill="#90a272"/>
<path d="M25 36l4-1 2 28-4 4zM48 32l6 2 2 22-4 0z" fill="#2a2b31"/>
<ellipse cx="40.500" cy="23" rx="5.500" ry="6.500" fill="#c6957a"/>
<path d="M38 28q4 5 8 0l1 6h-9z" fill="#c6957a"/>
<path d="M27 27q0-14 10-17q6-1 9 3l-6 14q-6 2-13 0z" fill="#d8cea0"/><path d="M26 27q8 3 14 0l-2 3q-6 2-12-1z" fill="#2a2a22"/>
<path d="M41 9q5-2 7 3q1 5-2 8l-5-3z" fill="#1c1b17"/>
<rect x="39" y="15" width="5" height="3" rx="1" fill="#1a2fb0"/>
<path d="M15 22q3-5 8-3q3 6 1 12q-3 4-8 3q-3-6-1-12z" fill="#e8981c"/><path d="M16.500 19q3-3 7 0q0 4-3 5q-4-1-4-5z" fill="#3c4850"/>
<path d="M11.500 24q2-3 4.500-2.500l-.5 11-3.500 2z" fill="#2a86d0"/>
<path d="M47.500 14q4-6 8-1q3 8 2 18l-8 2q-3-8-2-19z" fill="#e02a22"/><path d="M55 27l3 9-4-1z" fill="#2a59c9"/><path d="M47 14q1-3 4-3l-1 5z" fill="#f4f0ea"/>
<path d="M13.500 34q4-2 8 0q2 6-1 11l-6 1q-3-6-1-12z" fill="#d5a88e"/>
</g></g></svg></div>
<div class="abs" style="left:2652.800px;top:989.300px;width:71px;height:71px;border-radius:50%;background:#436b2b;border:3.400px solid #3c4043"></div>
<div class="t" style="left:2679.1px;top:1009.9px;font-size:37.5px;color:#fff;transform:scaleX(1.0122);-webkit-text-stroke:.4px #fff;">F</div>
<div class="t" style="left:2553.6px;top:1092.3px;font-size:28px;color:#fff;letter-spacing:0.717px;-webkit-text-stroke:.4px #fff;">Mais 6 pessoas</div>
<div class="tile" style="left:2290px;top:1204px;width:354px;height:244px"></div>
<div class="av" style="left:2414px;top:1273px;background:#465a65"></div>
<div class="t" style="left:2449.2px;top:1298.3px;font-size:57.5px;color:#fff;transform:scaleX(0.9336);">A</div>
<div class="mute" style="left:2568px;top:1228px"></div><svg class="abs" style="left:2575.8px;top:1235.5px" width="36.5" height="36.5" viewBox="0 0 24 24"><path fill="#fff" d="M19 11h-1.7c0 .74-.16 1.43-.43 2.05l1.23 1.23c.56-.98.9-2.09.9-3.28zm-4.02.17c0-.06.02-.11.02-.17V5c0-1.66-1.34-3-3-3S9 3.34 9 5v.18l5.98 5.99zM4.27 3L3 4.27l6.01 6.01V11c0 1.66 1.33 3 2.99 3 .22 0 .44-.03.65-.08l1.66 1.66c-.71.33-1.5.52-2.31.52-2.76 0-5.3-2.1-5.3-5.1H5c0 3.41 2.72 6.23 6 6.72V21h2v-3.28c.91-.13 1.77-.45 2.54-.9L19.73 21 21 19.73 4.27 3z"/></svg>
<div class="t nm" style="left:2322.8px;top:1393.3px;font-size:28px;color:#fff;letter-spacing:0.554px;-webkit-text-stroke:.4px #fff;">Associação EducPr...</div>
<div class="t" style="left:31.1px;top:1512.2px;font-size:32px;color:#fff;letter-spacing:0.002px;transform:scaleX(1.0001);">15:20</div>
<div class="abs" style="left:136px;top:1512px;width:2px;height:32px;background:#e3e3e3"></div>
<div class="t" style="left:160.6px;top:1512.2px;font-size:32px;color:#fff;letter-spacing:0.773px;transform:scaleX(1.0770);">hvk-hfhv-byc</div>
<div class="abs" style="left:860px;top:1480px;width:176px;height:96px;border-radius:24px;background:#5b1a14"></div>
<div class="abs" style="left:940px;top:1480px;width:96px;height:96px;border-radius:24px;background:#f6e0dd"></div>
<svg class="abs" style="left:893.400px;top:1518px" width="26" height="20" viewBox="0 0 26 20"><path d="M4.300 14.800L13 5.900l8.700 8.900" fill="none" stroke="#f2d8d4" stroke-width="2.150"/></svg>
<svg class="abs" style="left:964.1px;top:1503.5px" width="48" height="48" viewBox="0 0 24 24"><path fill="#5b1a14" d="M19 11h-1.7c0 .74-.16 1.43-.43 2.05l1.23 1.23c.56-.98.9-2.09.9-3.28zm-4.02.17c0-.06.02-.11.02-.17V5c0-1.66-1.34-3-3-3S9 3.34 9 5v.18l5.98 5.99zM4.27 3L3 4.27l6.01 6.01V11c0 1.66 1.33 3 2.99 3 .22 0 .44-.03.65-.08l1.66 1.66c-.71.33-1.5.52-2.31.52-2.76 0-5.3-2.1-5.3-5.1H5c0 3.41 2.72 6.23 6 6.72V21h2v-3.28c.91-.13 1.77-.45 2.54-.9L19.73 21 21 19.73 4.27 3z"/></svg>
<div class="abs" style="left:1052px;top:1480px;width:176px;height:96px;border-radius:24px;background:#5b1a14"></div>
<div class="abs" style="left:1132px;top:1480px;width:96px;height:96px;border-radius:24px;background:#f6e0dd"></div>
<svg class="abs" style="left:1085.200px;top:1518px" width="26" height="20" viewBox="0 0 26 20"><path d="M4.300 14.800L13 5.900l8.700 8.900" fill="none" stroke="#f2d8d4" stroke-width="2.150"/></svg>
<svg class="abs" style="left:1152px;top:1502px" width="56" height="56" viewBox="0 0 56 56"><rect x="9.700" y="12.400" width="28.300" height="27.400" rx="3.200" fill="none" stroke="#5b1a14" stroke-width="4.400"/><path d="M40 22.900L48.300 15.200V36.700L40 30.700z" fill="#5b1a14"/><path d="M9.200 5L48.100 43.200" stroke="#f6e0dd" stroke-width="2.800"/><path d="M6.800 6.900L46.300 45.700" stroke="#5b1a14" stroke-width="3.500"/></svg>
<div class="cb" style="left:1244px;width:112px"></div>
<svg class="abs" style="left:1276.0px;top:1504.0px" width="48" height="48" viewBox="0 0 24 24"><path fill="#e3e3e3" d="M19 4H5c-1.11 0-2 .9-2 2v12c0 1.1.89 2 2 2h14c1.1 0 2-.9 2-2V6c0-1.1-.9-2-2-2zm0 14H5V6h14v12zM7 15h3c.55 0 1-.45 1-1v-1H9.5v.5h-2v-3h2v.5H11v-1c0-.55-.45-1-1-1H7c-.55 0-1 .45-1 1v4c0 .55.45 1 1 1zm7 0h3c.55 0 1-.45 1-1v-1h-1.5v.5h-2v-3h2v.5H18v-1c0-.55-.45-1-1-1h-3c-.55 0-1 .45-1 1v4c0 .55.45 1 1 1z"/></svg>
<div class="cb" style="left:1372px;width:112px"></div>
<svg class="abs" style="left:1404.0px;top:1504.0px" width="48" height="48" viewBox="0 0 24 24"><path fill="#e3e3e3" d="M11.99 2C6.47 2 2 6.48 2 12s4.47 10 9.99 10C17.52 22 22 17.52 22 12S17.52 2 11.99 2zM12 20c-4.42 0-8-3.58-8-8s3.58-8 8-8 8 3.58 8 8-3.58 8-8 8zm3.5-9c.83 0 1.5-.67 1.5-1.5S16.33 8 15.5 8 14 8.67 14 9.5s.67 1.5 1.5 1.5zm-7 0c.83 0 1.5-.67 1.5-1.5S9.33 8 8.500 8 7 8.670 7 9.500 7.670 11 8.500 11zm3.500 6.500c2.330 0 4.310-1.460 5.110-3.500H6.890c.8 2.040 2.780 3.500 5.110 3.500z"/></svg>
<div class="cb" style="left:1500px;width:112px"></div>
<svg class="abs" style="left:1532.0px;top:1504.0px" width="48" height="48" viewBox="0 0 24 24"><path fill="#e3e3e3" d="M21 3H3c-1.11 0-2 .89-2 2v14c0 1.11.89 2 2 2h18c1.11 0 2-.89 2-2V5c0-1.11-.89-2-2-2zm0 16.02H3V4.98h18v14.04zM11 16v-4.200l-1.600 1.600L8 12l4-4 4 4-1.400 1.400-1.600-1.600V16z"/></svg>
<div class="cb" style="left:1628px;width:112px"></div>
<svg class="abs" style="left:1660.0px;top:1504.0px" width="48" height="48" viewBox="0 0 24 24"><path fill="#e3e3e3" d="M21 7c0-1.38-1.12-2.5-2.5-2.5-.17 0-.34.02-.5.05V4c0-1.38-1.12-2.5-2.5-2.5-.23 0-.46.03-.67.09C14.46.66 13.56 0 12.5 0c-1.23 0-2.25.89-2.46 2.060C9.870 2.020 9.690 2 9.500 2 8.120 2 7 3.120 7 4.500v5.890c-.34-.31-.76-.54-1.220-.66L5.010 9.520c-.83-.23-1.700.09-2.190.83-.38.57-.4 1.310-.15 1.950l2.560 6.430C6.490 21.910 9.570 24 13 24c4.420 0 8-3.580 8-8V7zm-2 9c0 3.310-2.690 6-6 6-2.610 0-4.950-1.590-5.910-4.010l-2.600-6.540.53.14c.46.12.83.46 1 .9L7 15h2V4.500c0-.28.22-.5.5-.5s.5.22.5.5V12h2V2.500c0-.28.22-.5.5-.5s.5.22.5.5V12h2V4c0-.28.22-.5.5-.5s.5.22.5.5v8h2V7c0-.28.22-.5.5-.5s.5.22.5.5v9z"/></svg>
<div class="cb" style="left:1756px;width:72px"></div>
<svg class="abs" style="left:1768.0px;top:1504.0px" width="48" height="48" viewBox="0 0 24 24"><path fill="#e3e3e3" d="M12 8c1.1 0 2-.9 2-2s-.9-2-2-2-2 .9-2 2 .9 2 2 2zm0 2c-1.1 0-2 .9-2 2s.9 2 2 2 2-.9 2-2-.9-2-2-2zm0 6c-1.1 0-2 .9-2 2s.9 2 2 2 2-.9 2-2-.9-2-2-2z"/></svg>
<div class="abs" style="left:1822px;top:1484px;width:24px;height:24px;border-radius:50%;background:#ea8538"></div>
<div class="cb" style="left:1844px;width:144px;background:#cd4439"></div>
<svg class="abs" style="left:1893.7px;top:1507.2px" width="44.6" height="44.6" viewBox="0 0 24 24"><path fill="#fff" d="M12 9c-1.6 0-3.15.25-4.6.72v3.1c0 .39-.23.74-.56.9-.98.49-1.87 1.12-2.66 1.85-.18.18-.43.28-.7.28-.28 0-.53-.11-.71-.29L.29 13.080c-.18-.17-.29-.42-.29-.7 0-.28.11-.53.29-.71C3.340 8.780 7.460 7 12 7s8.660 1.780 11.710 4.670c.18.18.29.43.29.71 0 .28-.11.53-.29.71l-2.480 2.480c-.18.18-.43.29-.71.29-.27 0-.52-.11-.7-.28-.79-.74-1.690-1.360-2.670-1.850-.33-.16-.56-.5-.56-.9v-3.100C15.150 9.250 13.600 9 12 9z"/></svg>
<svg class="abs" style="left:1893.700px;top:1507.200px" width="44.600" height="44.600" viewBox="0 0 24 24"><path d="M2.600 12.500l1.500 1.500 2-1.500v-2zM21.400 12.500l-1.500 1.500-2-1.500v-2z" fill="#cd4439"/></svg>
<svg class="abs" style="left:2254.0px;top:1504.0px" width="48" height="48" viewBox="0 0 24 24"><path fill="#fff" d="M11 7h2v2h-2zm0 4h2v6h-2zm1-9C6.48 2 2 6.48 2 12s4.48 10 10 10 10-4.48 10-10S17.520 2 12 2zm0 18c-4.410 0-8-3.590-8-8s3.590-8 8-8 8 3.590 8 8-3.590 8-8 8z"/></svg>
<svg class="abs" style="left:2347.6px;top:1501.8px" width="52.5" height="52.5" viewBox="0 0 24 24"><path fill="#fff" d="M9 13.75c-2.34 0-7 1.17-7 3.5V19h14v-1.75c0-2.33-4.66-3.5-7-3.5zM4.34 17c.84-.58 2.87-1.25 4.66-1.25s3.820.67 4.660 1.250H4.340zM9 12c1.930 0 3.500-1.570 3.500-3.500S10.930 5 9 5 5.500 6.570 5.500 8.500 7.070 12 9 12zm0-5c.83 0 1.500.67 1.500 1.500S9.830 10 9 10s-1.500-.67-1.500-1.500S8.170 7 9 7zm7.040 6.810c1.160.84 1.960 1.960 1.960 3.440V19h4v-1.750c0-2.020-3.500-3.170-5.960-3.440zM15 12c1.930 0 3.500-1.570 3.500-3.500S16.930 5 15 5c-.54 0-1.040.13-1.500.35.63.89 1 1.980 1 3.150s-.37 2.260-1 3.150c.46.22.96.35 1.500.35z"/></svg>
<svg class="abs" style="left:2446.0px;top:1504.0px" width="48" height="48" viewBox="0 0 24 24"><path fill="#fff" d="M4 4h16v12H5.17L4 17.17V4m0-2c-1.1 0-1.99.9-1.99 2L2 22l4-4h14c1.100 0 2-.9 2-2V4c0-1.100-.9-2-2-2H4zm2 10h8v2H6v-2zm0-3h12v2H6V9zm0-3h12v2H6V6z"/></svg>
<svg class="abs" style="left:2541.2px;top:1504.0px" width="48" height="48" viewBox="0 0 24 24"><path fill="#fff" d="M12 2l-5.5 9h11L12 2zm0 3.840L13.930 9h-3.870L12 5.840zM17.500 13c-2.490 0-4.500 2.010-4.500 4.500s2.010 4.500 4.500 4.500 4.500-2.010 4.500-4.500-2.010-4.500-4.500-4.500zm0 7c-1.380 0-2.500-1.120-2.500-2.500s1.120-2.500 2.500-2.500 2.500 1.120 2.500 2.500-1.120 2.500-2.500 2.500zM3 21.500h8v-8H3v8zm2-6h4v4H5v-4z"/></svg>
<svg class="abs" style="left:2637.400px;top:1504px" width="48" height="48" viewBox="0 0 24 24"><path fill="#fff" d="M6 22c-1.100 0-2-.9-2-2V10c0-1.100.9-2 2-2h1V6c0-2.760 2.240-5 5-5s5 2.240 5 5v2h1c1.100 0 2 .9 2 2v1.300c-.6-.3-1.300-.5-2-.6V10H6v10h5.300c.2.700.6 1.400 1 2H6zM9 8h6V6c0-1.660-1.340-3-3-3S9 4.340 9 6v2z"/><path fill="#fff" d="M18 13c-2.760 0-5 2.240-5 5s2.240 5 5 5 5-2.240 5-5-2.240-5-5-5zm0 1.500c.83 0 1.500.67 1.500 1.500s-.67 1.500-1.500 1.500-1.500-.67-1.500-1.500.67-1.500 1.500-1.500zm0 7.100c-1.250 0-2.350-.64-3-1.610.02-.99 2-1.540 3-1.540s2.980.55 3 1.540c-.65.970-1.750 1.610-3 1.610z"/></svg>
<div class="abs" style="left:2376px;top:1462px;width:53px;height:40px;border-radius:20px;background:#63666a"></div>
<div class="t" style="left:2390.0px;top:1471.2px;font-size:22.5px;color:#fff;letter-spacing:-0.788px;">15</div>
<div class="abs" style="left:2734px;top:1496px;width:2px;height:63px;background:#c4c7c5"></div>
<svg class="abs" style="left:2760px;top:1488px" width="80" height="80" viewBox="0 0 80 80"><circle cx="40" cy="40" r="40" fill="#a8c7fa"/><path d="M40 40V0A40 40 0 0 1 76.400 56.600z" fill="#8aa2cb"/>
<g fill="none" stroke="#0a2a66" stroke-width="3.600"><circle cx="40" cy="42" r="16.200"/><path d="M40 33v10l6.500 6.500" stroke-linejoin="miter"/><path d="M21.500 28.500l8.500-7M58.500 28.500l-8.500-7"/></g></svg>
</div></body></html>
